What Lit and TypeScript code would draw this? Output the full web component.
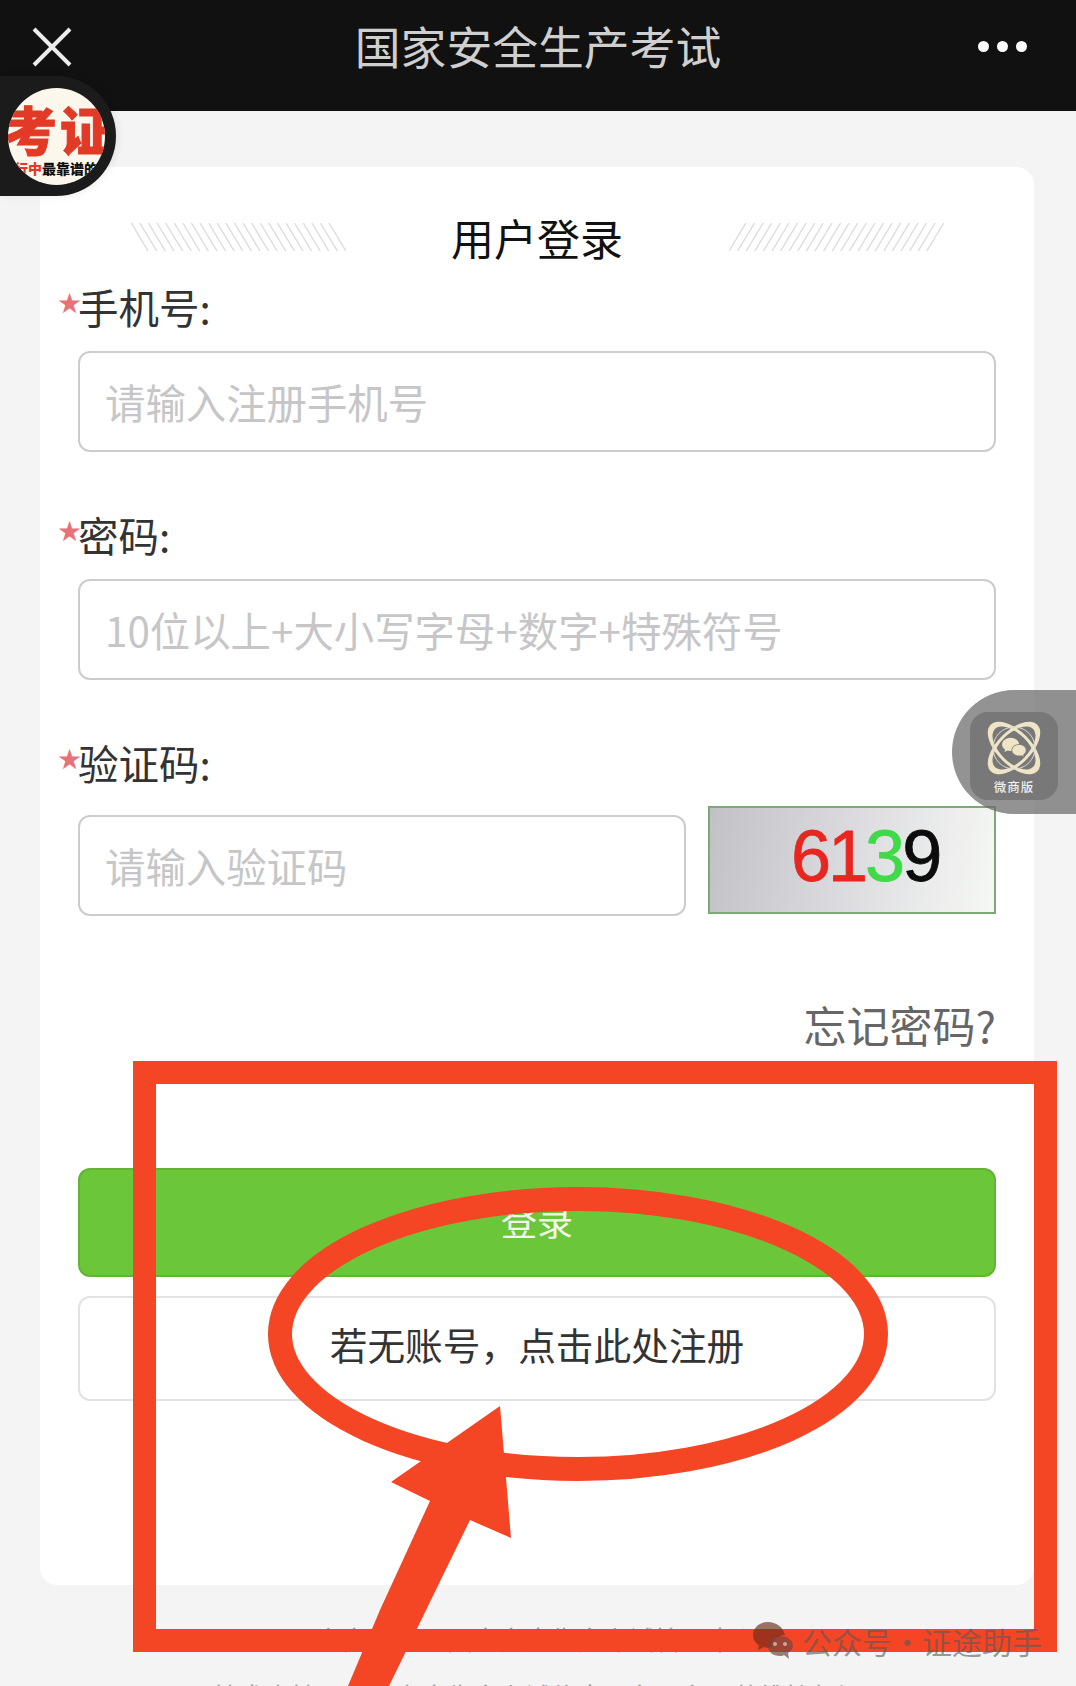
import { html, css, svg, LitElement } from 'lit';
import { customElement } from 'lit/decorators.js';

const hatchLines = Array.from({ length: 24 }, (_, i) => i * 8.6);

@customElement('app-root')
export class AppRoot extends LitElement {
  static override styles = css`
    :host {
      display: block;
      position: relative;
      height: 1686px;
      overflow: hidden;
      background: #f4f4f4;
      font-family: "Noto Sans CJK SC", "Noto Sans", sans-serif;
    }

    .topbar {
      height: 111px;
      box-sizing: border-box;
      padding: 0 32px 21px 32px;
      background: #111;
      display: grid;
      grid-template-columns: 1fr auto 1fr;
      align-items: center;
    }

    .topbar h1 {
      margin: 0;
      font-size: 45.8px;
      line-height: 60px;
      font-weight: 400;
      color: #cfcfcf;
    }

    .close {
      display: block;
      width: 40px;
      height: 40px;
      margin-top: 3px;
    }

    .dots {
      justify-self: end;
      display: flex;
      gap: 8px;
      margin: 2px 17px 0 0;
    }

    .dots span {
      width: 11px;
      height: 11px;
      border-radius: 50%;
      background: #fff;
    }

    .logo-tab {
      position: absolute;
      left: 0;
      top: 76px;
      width: 116px;
      height: 120px;
      border-radius: 0 60px 60px 0;
      background: #1b1b1b;
      box-shadow: 2px 0 8px rgba(0, 0, 0, 0.08);
    }

    .logo {
      position: absolute;
      left: 8px;
      top: 12px;
      width: 97px;
      height: 97px;
      border-radius: 50%;
      overflow: hidden;
      background: #fcf7ed;
    }

    .logo-main {
      position: absolute;
      left: -3px;
      top: 16px;
      width: 120px;
      font-size: 52px;
      line-height: 50px;
      font-weight: 900;
      letter-spacing: 3px;
      white-space: nowrap;
      color: #e23a26;
      -webkit-text-stroke: 1px #e23a26;
    }

    .logo-sub {
      position: absolute;
      left: 6px;
      top: 70px;
      width: 120px;
      font-size: 14px;
      line-height: 20px;
      font-weight: 900;
      white-space: nowrap;
      color: #111;
    }

    .logo-sub b {
      color: #e23a26;
      font-weight: 900;
    }

    .card {
      margin: 56px 42px 0 40px;
      box-sizing: border-box;
      height: 1418px;
      padding: 45px 38px 0;
      border-radius: 18px;
      background: #fff;
    }

    .heading {
      display: flex;
      align-items: center;
      justify-content: center;
      height: 56px;
      margin-bottom: 18px;
    }

    .heading h2 {
      margin: 0 0 6px;
      width: 383px;
      text-align: center;
      font-size: 43px;
      line-height: 50px;
      font-weight: 400;
      color: #111;
    }

    .hatch {
      width: 216px;
      height: 28px;
      margin-top: -6px;
      flex: none;
    }

    .hatch.flip {
      transform: scaleX(-1);
    }

    .field-label {
      display: flex;
      margin: 0 0 17px -21px;
      height: 48px;
      font-size: 40.5px;
      line-height: 42px;
      color: #333;
    }

    .star {
      width: 21px;
      font-size: 28px;
      line-height: 36px;
      color: #e8727a;
      font-family: "DejaVu Sans", sans-serif;
      white-space: nowrap;
    }

    input {
      display: block;
      width: 100%;
      height: 101px;
      box-sizing: border-box;
      margin: 0;
      padding: 0 25px;
      border: 2px solid #ccc;
      border-radius: 12px;
      background: #fff;
      font: inherit;
      font-size: 40.4px;
      color: #333;
      outline: none;
    }

    input::placeholder {
      color: #c6c6c8;
      opacity: 1;
    }

    .group {
      margin-bottom: 62px;
    }

    .group.last {
      margin-bottom: 87px;
    }

    .group.last .field-label {
      margin-bottom: 16px;
    }

    .captcha-row {
      display: flex;
      align-items: flex-start;
      gap: 22px;
    }

    .captcha-row input {
      flex: 1;
      margin-top: 9px;
    }

    .captcha {
      flex: none;
      width: 288px;
      height: 108px;
      box-sizing: border-box;
      border: 2px solid #7fa877;
      background: linear-gradient(100deg, #c2c2c6 0%, #dcdce0 50%, #f6f8f4 100%);
      padding: 0 0 0 81px;
      font-family: "Liberation Sans", sans-serif;
      font-size: 72px;
      line-height: 97px;
      letter-spacing: -3px;
      white-space: nowrap;
      -webkit-text-stroke: 0.8px currentColor;
    }

    .captcha .r { color: #e8261f; }
    .captcha .g { color: #3fd94a; }
    .captcha .k { color: #0c0c0c; }

    .forgot {
      height: 48px;
      margin-bottom: 117px;
      text-align: right;
      font-size: 43px;
      line-height: 42px;
      color: #666;
    }

    button {
      display: block;
      width: 100%;
      box-sizing: border-box;
      margin: 0;
      font: inherit;
      border-radius: 12px;
    }

    .login {
      height: 109px;
      margin-bottom: 19px;
      padding: 0 0 6px;
      border: 2px solid #63b337;
      background: #6cc63a;
      color: #f1f8ea;
      font-size: 36px;
    }

    .register {
      height: 105px;
      padding: 0 0 10px;
      border: 2px solid #e2e2e4;
      background: #fff;
      color: #333;
      font-size: 37.7px;
    }

    .foot {
      margin-top: 25px;
      text-align: center;
      font-size: 26px;
      line-height: 57px;
      color: #999;
    }

    .foot p {
      margin: 0;
      white-space: nowrap;
    }

    .badge {
      position: absolute;
      left: 952px;
      top: 690px;
      width: 124px;
      height: 124px;
      box-sizing: border-box;
      padding: 22px 18px 14px 18px;
      border-radius: 62px 0 0 62px;
      background: rgba(105, 105, 105, 0.72);
    }

    .badge-inner {
      height: 88px;
      border-radius: 18px;
      background: #787878;
      display: flex;
      flex-direction: column;
      align-items: center;
      padding-top: 6px;
      box-sizing: border-box;
      font-size: 12.5px;
      line-height: 16px;
      letter-spacing: 1px;
      font-weight: 500;
      color: #eee;
    }

    .badge-inner svg {
      display: block;
      width: 60px;
      height: 60px;
      margin-bottom: 1px;
    }

    .marks {
      position: absolute;
      left: 0;
      top: 0;
      width: 1076px;
      height: 1686px;
      pointer-events: none;
    }

    .watermark {
      position: absolute;
      left: 752px;
      top: 1621px;
      display: flex;
      align-items: center;
      gap: 8px;
      font-size: 30px;
      line-height: 40px;
      white-space: nowrap;
      color: rgba(88, 88, 88, 0.6);
    }

    .watermark svg {
      width: 42px;
      height: 40px;
    }
  `;

  private renderHatch(flip: boolean) {
    return html`
      <svg class="hatch ${flip ? '' : 'flip'}" viewBox="0 0 216 28">
        ${hatchLines.map(x => svg`
          <line x1=${x} y1="28" x2=${x + 17} y2="0" stroke="#dcdcdc" stroke-width="1.4"/>
        `)}
      </svg>
    `;
  }

  private renderLabel(text: string) {
    return html`<div class="field-label"><span class="star">★</span>${text}</div>`;
  }

  override render() {
    return html`
      <header class="topbar">
        <svg class="close" viewBox="0 0 40 40">
          <path d="M2 2L38 38M38 2L2 38" stroke="#ececec" stroke-width="4" fill="none"/>
        </svg>
        <h1>国家安全生产考试</h1>
        <div class="dots"><span></span><span></span><span></span></div>
      </header>

      <main class="card">
        <div class="heading">
          ${this.renderHatch(false)}
          <h2>用户登录</h2>
          ${this.renderHatch(true)}
        </div>

        <div class="group">
          ${this.renderLabel('手机号:')}
          <input placeholder="请输入注册手机号" />
        </div>

        <div class="group">
          ${this.renderLabel('密码:')}
          <input placeholder="10位以上+大小写字母+数字+特殊符号" />
        </div>

        <div class="group last">
          ${this.renderLabel('验证码:')}
          <div class="captcha-row">
            <input placeholder="请输入验证码" />
            <div class="captcha"><span class="r">61</span><span class="g">3</span><span class="k">9</span></div>
          </div>
        </div>

        <div class="forgot">忘记密码?</div>
        <button class="login">登录</button>
        <button class="register">若无账号，点击此处注册</button>
      </main>

      <footer class="foot">
        <p>主办单位：国家安全生产考试管理中心</p>
        <p>技术支持：国家安全生产考试信息服务平台运营维护部门</p>
      </footer>

      <div class="logo-tab">
        <div class="logo">
          <div class="logo-main">考证</div>
          <div class="logo-sub"><b>行中</b>最靠谱的</div>
        </div>
      </div>

      <div class="badge">
        <div class="badge-inner">
          <svg viewBox="0 0 60 60">
            <g fill="#efe4c6" fill-rule="evenodd">
              <path transform="rotate(45 30 30)" d="M-3 30a33 17 0 1 0 66 0a33 17 0 1 0 -66 0zM3 30a27 14 0 1 1 54 0a27 14 0 1 1 -54 0z"/>
              <path transform="rotate(-45 30 30)" d="M-3 30a33 17 0 1 0 66 0a33 17 0 1 0 -66 0zM3 30a27 14 0 1 1 54 0a27 14 0 1 1 -54 0z"/>
            </g>
            <circle cx="30" cy="30" r="21" fill="none" stroke="#d8d8d4" stroke-width="1"/>
            <g transform="translate(4.500 4.350) scale(0.85)">
              <path fill="#efe4c6" d="M26 18c-5.500 0-10 3.500-10 8 0 2.500 1.400 4.600 3.500 6l-.7 3 3.600-1.800c1.100.3 2.300.5 3.600.5 5.500 0 10-3.500 10-7.700s-4.500-8-10-8z"/>
              <path fill="#efe4c6" stroke="#787878" stroke-width="1" d="M36 26c-4.700 0-8.500 3-8.500 6.800s3.800 6.800 8.500 6.800c1 0 2-.1 2.900-.4l3 1.500-.6-2.600c1.800-1.300 3-3.200 3-5.300 0-3.800-3.600-6.800-8.300-6.800z"/>
            </g>
          </svg>
          微商版
        </div>
      </div>

      <svg class="marks" viewBox="0 0 1076 1686">
        <g fill="none" stroke="#f44525">
          <rect x="144.500" y="1072.500" width="901" height="568" stroke-width="23"/>
          <ellipse cx="578" cy="1334" rx="298" ry="135" stroke-width="24"/>
        </g>
        <polygon fill="#f44525" points="500,1406 511,1538 470,1520 389,1686 348,1686 380,1610 430,1501 391,1482"/>
      </svg>

      <div class="watermark">
        <svg viewBox="0 0 42 40">
          <path fill="rgba(110,40,25,0.65)" d="M16 1C7 1 1 7 1 14c0 4 2 8 6 10l-1 5 6-3c1 0 3 1 4 1 1 0 3-1 4-1 0-7 6-12 13-12-2-8-9-13-17-13z"/>
          <path fill="rgba(120,70,60,0.7)" d="M28 15c-7 0-12 4-12 10s5 10 12 10c1 0 3 0 4-1l5 4-1-6c3-2 5-4 5-7 0-6-6-10-13-10z"/>
          <g fill="#f2f2f2" opacity="0.55">
            <circle cx="23" cy="23" r="2"/>
            <circle cx="33" cy="23" r="2"/>
          </g>
        </svg>
        <span>公众号·证途助手</span>
      </div>
    `;
  }
}
